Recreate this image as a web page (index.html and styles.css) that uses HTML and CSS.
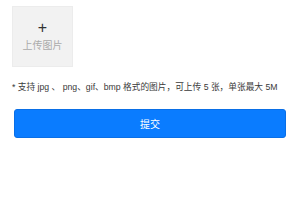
FILE: index.html
```html
<!DOCTYPE html>
<html lang="zh-CN">
  <head>
    <meta charset="utf-8" />
    <title>上传图片</title>
    <link rel="stylesheet" href="styles.css">
  </head>
  <body>
    <div class="upload-page">
      <div class="uploader">
        <span class="plus">+</span>
        <span class="label">上传图片</span>
      </div>
      <p class="tip">* 支持 jpg 、 png、gif、bmp 格式的图片，可上传 5 张，单张最大 5M</p>
      <button class="btn-submit">提交</button>
    </div>
  </body>
</html>
```
FILE: styles.css
```css
* {
  margin: 0;
  padding: 0;
  box-sizing: border-box;
}

body {
  font-family: "Liberation Sans", "Noto Sans CJK SC", sans-serif;
  background: #fff;
  color: #333;
}

.upload-page {
  padding: 6px 12px 0 12px;
}

.uploader {
  width: 61px;
  height: 61px;
  background: #f2f2f2;
  border: 1px solid #ececec;
  display: flex;
  flex-direction: column;
  align-items: center;
  justify-content: center;
}

.uploader .plus {
  font-size: 16px;
  line-height: 14px;
  color: #333;
}

.uploader .label {
  font-size: 10px;
  color: #aaa;
  margin-top: 2px;
}

.tip {
  font-size: 8.7px;
  line-height: 11px;
  color: #3a3a3a;
  margin-top: 15px;
  white-space: nowrap;
}

.btn-submit {
  display: block;
  width: 272px;
  height: 29px;
  margin: 16px 0 0 2px;
  background: #0a7cff;
  border: 1px solid #0a6fe6;
  border-radius: 3px;
  color: #fff;
  font-family: "Liberation Sans", "Noto Sans CJK SC", sans-serif;
  font-size: 10px;
}
```
